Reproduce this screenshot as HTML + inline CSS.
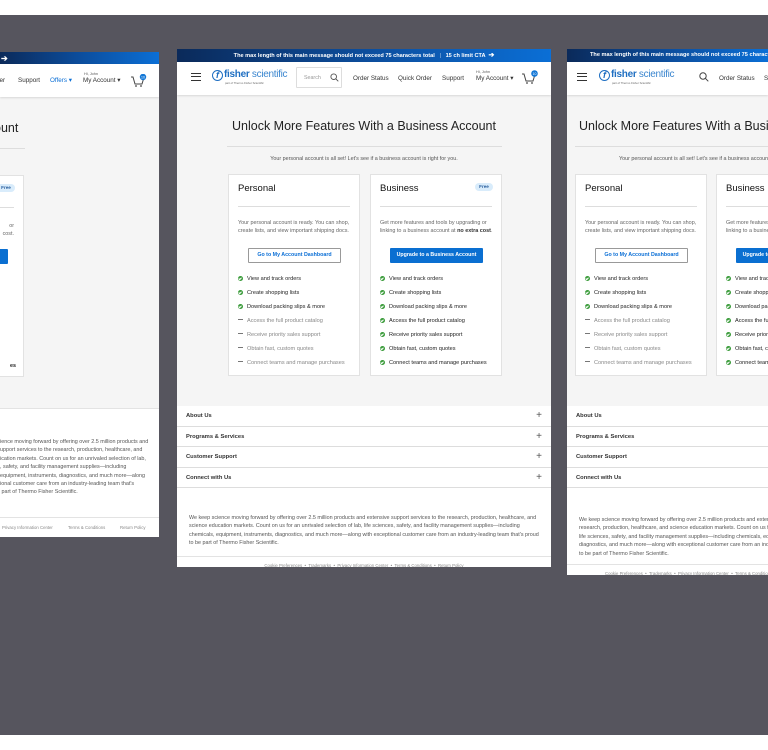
<!DOCTYPE html>
<html><head><meta charset="utf-8">
<style>
*{margin:0;padding:0;box-sizing:border-box}
html,body{width:768px;height:750px;overflow:hidden;background:#fff;font-family:"Liberation Sans",Arial,sans-serif;color:#222}
#bg{position:absolute;left:0;top:15px;width:768px;height:720px;background:#56555e}
.fr{position:absolute;overflow:hidden;background:#f5f5f5}
.a{position:absolute;white-space:nowrap}
.ban{position:absolute;left:0;top:0;height:13px;background:linear-gradient(90deg,#0b2a5a,#0c4d9c 50%,#0b6fd6);color:#fff;font-size:5.6px;line-height:13px;text-align:center;font-weight:bold;white-space:nowrap;overflow:hidden}
.hdr{position:absolute;left:0;top:13px;height:33px;background:#fff;box-shadow:0 1px 2px rgba(0,0,0,.12)}
.nav{font-size:6.3px;color:#333}
.ttl{font-size:12.5px;color:#222}
.sub{font-size:5.4px;color:#555}
.card{position:absolute;width:132px;height:202px;background:#fff;border:1px solid #e2e2e2;overflow:hidden}
.card h3{position:absolute;left:9px;top:8px;font-size:9.5px;font-weight:normal;color:#111}
.card .ln{position:absolute;left:9px;right:9px;top:31px;height:1px;background:#ddd}
.card .d{position:absolute;left:9px;top:44px;font-size:5.45px;line-height:8.3px;color:#666;white-space:nowrap}
.btn{position:absolute;left:19px;top:73px;width:93px;height:15px;font-size:5.3px;font-weight:bold;line-height:13px;text-align:center;border:1px solid #999;color:#0b6fd6;background:#fff;border-radius:1px}
.btn.b{background:#0a6fd1;border-color:#0a6fd1;color:#fff}
.li{position:absolute;left:9px;font-size:5.6px;color:#222;white-space:nowrap;line-height:6px}
.li i{display:inline-block;width:5px;height:5px;border-radius:50%;background:#3a9b3a;vertical-align:-1px;margin-right:4px;position:relative}
.li i:after{content:"";position:absolute;left:1.4px;top:0.9px;width:1.2px;height:2.2px;border:solid #fff;border-width:0 .7px .7px 0;transform:rotate(45deg)}
.li.g{color:#888}
.li.g i{border-radius:0;height:1px;background:#777;vertical-align:2px}
.li.g i:after{display:none}
.free{position:absolute;right:8px;top:8px;width:18px;height:8px;border-radius:4px;background:#d9ecfb;color:#2a5f9e;font-size:4.6px;font-weight:bold;text-align:center;line-height:8px}
.acc{position:absolute;left:0;height:20.5px;background:#fff;border-bottom:1px solid #ddd;font-size:5.8px;font-weight:bold;color:#333;line-height:20px;padding-left:9px}
.acc span{position:absolute;right:9px;top:0;font-size:10px;font-weight:normal;color:#555}
.ft{font-size:5.4px;line-height:8.4px;color:#555}
.lnk{font-size:4.3px;color:#888}
</style></head><body>
<div id="bg"></div>

<!-- LEFT FRAME -->
<div class="fr" style="left:0;top:52px;width:159px;height:485px">
 <div class="ban" style="width:159px;height:12px"><span class="a" style="left:1px;top:0;font-size:8px">➔</span></div>
 <div class="hdr" style="top:12px;width:159px;height:33px">
  <div class="a nav" style="left:-4px;top:13px">der</div>
  <div class="a nav" style="left:18px;top:13px">Support</div>
  <div class="a nav" style="left:50px;top:13px;color:#0b6fd6">Offers ▾</div>
  <div class="a" style="left:84px;top:8px;font-size:3.8px;color:#555">Hi, John</div>
  <div class="a nav" style="left:83px;top:13px">My Account ▾</div>
  <svg class="a" style="left:130px;top:10px" width="18" height="14" viewBox="0 0 18 14"><path d="M1 3h2l2 7h7l1.5-5" fill="none" stroke="#444" stroke-width="1"/><circle cx="6" cy="12" r=".9" fill="#444"/><circle cx="11" cy="12" r=".9" fill="#444"/><circle cx="13" cy="3" r="3.2" fill="#1377d6"/><text x="13" y="4.3" font-size="3.5" fill="#fff" text-anchor="middle" font-family="Liberation Sans">10</text></svg>
 </div>
 <div class="a ttl" style="left:-6px;top:69px">ount</div>
 <div class="a" style="left:0;top:96px;width:25px;height:1px;background:#ddd"></div>
 <div class="card" style="left:-108px;top:123px">
  <div class="free">Free</div>
  <div class="ln"></div>
  <div class="a" style="right:9px;top:46px;font-size:5.4px;line-height:8.3px;color:#666;text-align:right">or<br>cost.</div>
  <div class="btn b" style="left:20px;width:95px"></div>
  <div class="a" style="right:7px;top:187px;font-size:5.4px;font-weight:bold">es</div>
 </div>
 <div class="a" style="left:0;top:356px;width:159px;height:129px;background:#fff;border-top:1px solid #e3e3e3"></div>
 <div class="a ft" style="left:0;top:386px">ience moving forward by offering over 2.5 million products and<br>upport services to the research, production, healthcare, and<br>ication markets. Count on us for an unrivaled selection of lab,<br>, safety, and facility management supplies—including<br>equipment, instruments, diagnostics, and much more—along<br>ional customer care from an industry-leading team that's<br>&nbsp;part of Thermo Fisher Scientific.</div>
 <div class="a" style="left:0;top:465px;width:159px;height:1px;background:#e3e3e3"></div>
 <div class="a lnk" style="left:2px;top:473px">Privacy Information Center</div>
 <div class="a lnk" style="left:68px;top:473px">Terms &amp; Conditions</div>
 <div class="a lnk" style="left:120px;top:473px">Return Policy</div>
</div>

<!-- CENTER FRAME -->
<div class="fr" style="left:177px;top:49px;width:374px;height:518px">
 <div class="ban" style="width:374px">The max length of this main message should not exceed 75 characters total &nbsp;&nbsp;<span style="font-weight:normal;opacity:.7">|</span>&nbsp;&nbsp; 15 ch limit CTA &nbsp;<span style="font-size:7px">➔</span></div>
 <div class="hdr" style="width:374px">
  <div class="a" style="left:14px;top:11px;width:10px;height:8px;border-top:1.3px solid #333;border-bottom:1.3px solid #333"><div style="margin-top:2.1px;height:1.3px;background:#333"></div></div>
  <div class="a" style="left:35px;top:8px;width:11px;height:11px;border:1.2px solid #1f6fc2;border-radius:50%;color:#1f6fc2;font-size:9px;font-weight:bold;line-height:9px;text-align:center;font-style:italic">f</div>
  <div class="a" style="left:47px;top:7px;font-size:10px;color:#1f6fc2;letter-spacing:-.3px"><b>fisher</b><span style="color:#3b86cf"> scientific</span></div>
  <div class="a" style="left:48px;top:19px;font-size:2.8px;color:#666">part of Thermo Fisher Scientific</div>
  <div class="a" style="left:119px;top:5px;width:46px;height:21px;border:1px solid #ddd;border-radius:1px"><span class="a" style="left:7px;top:7px;font-size:5.3px;color:#999">Search</span><svg class="a" style="left:33px;top:5px" width="9" height="9" viewBox="0 0 9 9"><circle cx="3.7" cy="3.7" r="2.8" fill="none" stroke="#555" stroke-width=".9"/><path d="M5.8 5.8L8.3 8.3" stroke="#555" stroke-width=".9"/></svg></div>
  <div class="a nav" style="left:176px;top:13px">Order Status</div>
  <div class="a nav" style="left:221px;top:13px">Quick Order</div>
  <div class="a nav" style="left:265px;top:13px">Support</div>
  <div class="a" style="left:299px;top:8px;font-size:3.8px;color:#555">Hi, John</div>
  <div class="a nav" style="left:299px;top:13px">My Account ▾</div>
  <svg class="a" style="left:344px;top:8px" width="18" height="15" viewBox="0 0 18 15"><path d="M1 4h2l2 7h7l1.5-5" fill="none" stroke="#444" stroke-width="1"/><circle cx="6" cy="13" r=".9" fill="#444"/><circle cx="11" cy="13" r=".9" fill="#444"/><circle cx="13.5" cy="3.5" r="3.3" fill="#1377d6"/><text x="13.5" y="4.8" font-size="3.5" fill="#fff" text-anchor="middle" font-family="Liberation Sans">10</text></svg>
 </div>
 <div class="a ttl" style="left:0;width:374px;text-align:center;top:70px">Unlock More Features With a Business Account</div>
 <div class="a" style="left:50px;top:97px;width:275px;height:1px;background:#ddd"></div>
 <div class="a sub" style="left:0;width:374px;text-align:center;top:107px">Your personal account is all set! Let's see if a business account is right for you.</div>
 <div class="card" style="left:51px;top:125px">
  <h3>Personal</h3><div class="ln"></div>
  <div class="d">Your personal account is ready. You can shop,<br>create lists, and view important shipping docs.</div>
  <div class="btn">Go to My Account Dashboard</div>
  <div class="li" style="top:101px"><i></i>View and track orders</div>
  <div class="li" style="top:115px"><i></i>Create shopping lists</div>
  <div class="li" style="top:129px"><i></i>Download packing slips &amp; more</div>
  <div class="li g" style="top:143px"><i></i>Access the full product catalog</div>
  <div class="li g" style="top:157px"><i></i>Receive priority sales support</div>
  <div class="li g" style="top:171px"><i></i>Obtain fast, custom quotes</div>
  <div class="li g" style="top:185px"><i></i>Connect teams and manage purchases</div>
 </div>
 <div class="card" style="left:193px;top:125px">
  <h3>Business</h3><div class="free">Free</div><div class="ln"></div>
  <div class="d">Get more features and tools by upgrading or<br>linking to a business account at <b style="color:#333">no extra cost</b>.</div>
  <div class="btn b">Upgrade to a Business Account</div>
  <div class="li" style="top:101px"><i></i>View and track orders</div>
  <div class="li" style="top:115px"><i></i>Create shopping lists</div>
  <div class="li" style="top:129px"><i></i>Download packing slips &amp; more</div>
  <div class="li" style="top:143px"><i></i>Access the full product catalog</div>
  <div class="li" style="top:157px"><i></i>Receive priority sales support</div>
  <div class="li" style="top:171px"><i></i>Obtain fast, custom quotes</div>
  <div class="li" style="top:185px"><i></i>Connect teams and manage purchases</div>
 </div>
 <div class="a" style="left:0;top:357px;width:374px;height:161px;background:#fff"></div>
 <div class="acc" style="top:357px;width:374px">About Us<span>+</span></div>
 <div class="acc" style="top:377.5px;width:374px">Programs &amp; Services<span>+</span></div>
 <div class="acc" style="top:398px;width:374px">Customer Support<span>+</span></div>
 <div class="acc" style="top:418.5px;width:374px">Connect with Us<span>+</span></div>
 <div class="a ft" style="left:12px;top:465px">We keep science moving forward by offering over 2.5 million products and extensive support services to the research, production, healthcare, and<br>science education markets. Count on us for an unrivaled selection of lab, life sciences, safety, and facility management supplies—including<br>chemicals, equipment, instruments, diagnostics, and much more—along with exceptional customer care from an industry-leading team that's proud<br>to be part of Thermo Fisher Scientific.</div>
 <div class="a" style="left:0;top:507px;width:374px;height:1px;background:#e3e3e3"></div>
 <div class="a lnk" style="left:0;width:374px;text-align:center;top:514px">Cookie Preferences &nbsp;•&nbsp; Trademarks &nbsp;•&nbsp; Privacy Information Center &nbsp;•&nbsp; Terms &amp; Conditions &nbsp;•&nbsp; Return Policy</div>
</div>

<!-- RIGHT FRAME -->
<div class="fr" style="left:567px;top:49px;width:201px;height:526px">
 <div class="ban" style="width:201px;text-align:left;padding-left:23px">The max length of this main message should not exceed 75 characters total</div>
 <div class="hdr" style="width:201px">
  <div class="a" style="left:10px;top:11px;width:10px;height:8px;border-top:1.3px solid #333;border-bottom:1.3px solid #333"><div style="margin-top:2.1px;height:1.3px;background:#333"></div></div>
  <div class="a" style="left:32px;top:8px;width:11px;height:11px;border:1.2px solid #1f6fc2;border-radius:50%;color:#1f6fc2;font-size:9px;font-weight:bold;line-height:9px;text-align:center;font-style:italic">f</div>
  <div class="a" style="left:44px;top:7px;font-size:10px;color:#1f6fc2;letter-spacing:-.3px"><b>fisher</b><span style="color:#3b86cf"> scientific</span></div>
  <div class="a" style="left:45px;top:19px;font-size:2.8px;color:#666">part of Thermo Fisher Scientific</div>
  <svg class="a" style="left:132px;top:10px" width="10" height="10" viewBox="0 0 10 10"><circle cx="4" cy="4" r="3.2" fill="none" stroke="#444" stroke-width="1"/><path d="M6.4 6.4L9.3 9.3" stroke="#444" stroke-width="1"/></svg>
  <div class="a nav" style="left:152px;top:13px">Order Status</div>
  <div class="a nav" style="left:197px;top:13px">Support</div>
 </div>
 <div class="a ttl" style="left:12px;top:70px">Unlock More Features With a Business Account</div>
 <div class="a" style="left:8px;top:97px;width:193px;height:1px;background:#ddd"></div>
 <div class="a sub" style="left:52px;top:107px">Your personal account is all set! Let's see if a business account is right for you.</div>
 <div class="card" style="left:8px;top:125px">
  <h3>Personal</h3><div class="ln"></div>
  <div class="d">Your personal account is ready. You can shop,<br>create lists, and view important shipping docs.</div>
  <div class="btn">Go to My Account Dashboard</div>
  <div class="li" style="top:101px"><i></i>View and track orders</div>
  <div class="li" style="top:115px"><i></i>Create shopping lists</div>
  <div class="li" style="top:129px"><i></i>Download packing slips &amp; more</div>
  <div class="li g" style="top:143px"><i></i>Access the full product catalog</div>
  <div class="li g" style="top:157px"><i></i>Receive priority sales support</div>
  <div class="li g" style="top:171px"><i></i>Obtain fast, custom quotes</div>
  <div class="li g" style="top:185px"><i></i>Connect teams and manage purchases</div>
 </div>
 <div class="card" style="left:149px;top:125px">
  <h3>Business</h3><div class="ln"></div>
  <div class="d">Get more features and tools by upgrading or<br>linking to a business account at <b style="color:#333">no extra cost</b>.</div>
  <div class="btn b">Upgrade to a Business Account</div>
  <div class="li" style="top:101px"><i></i>View and track orders</div>
  <div class="li" style="top:115px"><i></i>Create shopping lists</div>
  <div class="li" style="top:129px"><i></i>Download packing slips &amp; more</div>
  <div class="li" style="top:143px"><i></i>Access the full product catalog</div>
  <div class="li" style="top:157px"><i></i>Receive priority sales support</div>
  <div class="li" style="top:171px"><i></i>Obtain fast, custom quotes</div>
  <div class="li" style="top:185px"><i></i>Connect teams and manage purchases</div>
 </div>
 <div class="a" style="left:0;top:357px;width:201px;height:169px;background:#fff"></div>
 <div class="acc" style="top:357px;width:201px">About Us</div>
 <div class="acc" style="top:377.5px;width:201px">Programs &amp; Services</div>
 <div class="acc" style="top:398px;width:201px">Customer Support</div>
 <div class="acc" style="top:418.5px;width:201px">Connect with Us</div>
 <div class="a ft" style="left:12px;top:467px">We keep science moving forward by offering over 2.5 million products and extensive support services to the<br>research, production, healthcare, and science education markets. Count on us for an unrivaled selection of lab,<br>life sciences, safety, and facility management supplies—including chemicals, equipment, instruments,<br>diagnostics, and much more—along with exceptional customer care from an industry-leading team that's proud<br>to be part of Thermo Fisher Scientific.</div>
 <div class="a" style="left:0;top:515px;width:201px;height:1px;background:#e3e3e3"></div>
 <div class="a lnk" style="left:38px;top:522px">Cookie Preferences &nbsp;•&nbsp; Trademarks &nbsp;•&nbsp; Privacy Information Center &nbsp;•&nbsp; Terms &amp; Conditions</div>
</div>
</body></html>
